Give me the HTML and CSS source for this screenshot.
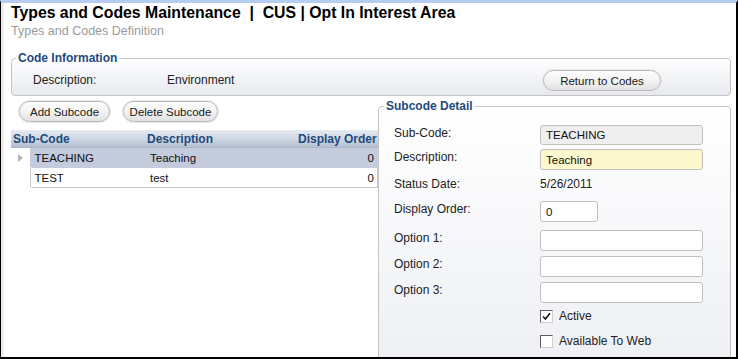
FILE: index.html
```html
<!DOCTYPE html>
<html lang="en">
<head>
    <meta charset="UTF-8">
    <title>Types and Codes Maintenance</title>
    <link rel="stylesheet" href="styles.css">
</head>
<body>
    <div class="frame">
        <div class="page">
            <div class="page-title">Types and Codes Maintenance &nbsp;|&nbsp; CUS | Opt In Interest Area</div>
            <div class="page-subtitle">Types and Codes Definition</div>

            <fieldset class="code-info">
                <legend>Code Information</legend>
                <div class="info-row">
                    <span class="info-label">Description:</span>
                    <span class="info-value">Environment</span>
                    <button class="pill-button return-button" type="button">Return to Codes</button>
                </div>
            </fieldset>

            <div class="main">
                <div class="left-panel">
                    <div class="toolbar">
                        <button class="pill-button add-button" type="button">Add Subcode</button>
                        <button class="pill-button delete-button" type="button">Delete Subcode</button>
                    </div>
                    <table class="grid">
                        <colgroup>
                            <col class="c-ind">
                            <col class="c-code">
                            <col class="c-desc">
                            <col class="c-order">
                        </colgroup>
                        <thead>
                            <tr>
                                <th colspan="2" class="col-code">Sub-Code</th>
                                <th class="col-desc">Description</th>
                                <th class="col-order">Display Order</th>
                            </tr>
                        </thead>
                        <tbody>
                            <tr class="selected">
                                <td class="indicator"><span class="arrow"></span></td>
                                <td>TEACHING</td>
                                <td>Teaching</td>
                                <td class="num">0</td>
                            </tr>
                            <tr>
                                <td class="indicator"></td>
                                <td>TEST</td>
                                <td>test</td>
                                <td class="num">0</td>
                            </tr>
                        </tbody>
                    </table>
                </div>

                <fieldset class="detail">
                    <legend>Subcode Detail</legend>
                    <div class="detail-grid">
                        <label for="sub-code">Sub-Code:</label>
                        <input type="text" id="sub-code" class="field readonly" value="TEACHING" readonly>

                        <label for="description">Description:</label>
                        <input type="text" id="description" class="field required" value="Teaching">

                        <span class="detail-label">Status Date:</span>
                        <span class="detail-value">5/26/2011</span>

                        <label for="display-order">Display Order:</label>
                        <input type="text" id="display-order" class="field short" value="0">

                        <label for="option1">Option 1:</label>
                        <input type="text" id="option1" class="field">

                        <label for="option2">Option 2:</label>
                        <input type="text" id="option2" class="field">

                        <label for="option3">Option 3:</label>
                        <input type="text" id="option3" class="field">

                        <span></span>
                        <div class="check-row"><span class="check-box"><svg width="9" height="9" viewBox="0 0 9 9"><path d="M1 4.5 L3.4 7 L8 1.2" fill="none" stroke="#111" stroke-width="1.6"/></svg></span>Active</div>

                        <span></span>
                        <div class="check-row"><span class="check-box"></span>Available To Web</div>
                    </div>
                </fieldset>
            </div>
        </div>
    </div>
</body>
</html>
```

FILE: styles.css
```css
body {
    margin: 0;
    font-family: "Liberation Sans", Arial, sans-serif;
    background-color: #ffffff;
}

.frame {
    width: 735px;
    height: 354px;
    border-left: 1px solid #000000;
    border-right: 2px solid #000000;
    border-bottom: 2px solid #000000;
    border-top: 3px solid #b4cdf0;
    overflow: hidden;
}

.page {
    height: 100%;
    border-left: 3px solid #ececec;
    padding: 0 4px 0 7px;
    box-sizing: border-box;
}

.page-title {
    font-size: 15.8px;
    font-weight: bold;
    color: #000000;
    line-height: 18px;
    padding-top: 1px;
}

.page-subtitle {
    font-size: 12.5px;
    color: #9a9a9a;
    line-height: 14px;
    margin-top: 2px;
}

fieldset {
    margin: 0;
    padding: 0;
    border: 1px solid #c4c4c4;
    border-radius: 4px;
    background: linear-gradient(#ffffff, #e6e9ef);
}

legend {
    font-size: 12px;
    font-weight: bold;
    color: #1e4b7d;
    padding: 0 2px;
    margin-left: 4px;
    line-height: 14px;
}

.code-info {
    margin-top: 13px;
    width: 720px;
    box-sizing: border-box;
}

.info-row {
    display: flex;
    align-items: center;
    height: 30px;
    padding-left: 21px;
}

.info-label {
    font-size: 12px;
    color: #222222;
    width: 134px;
}

.info-value {
    font-size: 12px;
    color: #222222;
}

.pill-button {
    font-family: "Liberation Sans", Arial, sans-serif;
    font-size: 11.5px;
    color: #1a1a1a;
    border: 1px solid #b8b8b8;
    border-radius: 11px;
    background: linear-gradient(#fdfdfd, #f3f3f3 50%, #e2e2e2);
    box-shadow: 0 0 0 1px #ebebeb;
    height: 21px;
    padding: 0;
}

.return-button {
    width: 118px;
    margin-left: auto;
    margin-right: 69px;
    margin-top: 1px;
}

.main {
    display: grid;
    grid-template-columns: 367px 353px;
}

.toolbar {
    display: flex;
    gap: 13px;
    padding: 5px 0 0 8px;
    height: 29px;
    box-sizing: border-box;
}

.add-button {
    width: 91px;
}

.delete-button {
    width: 95px;
}

.grid {
    border-collapse: collapse;
    table-layout: fixed;
    width: 367px;
    margin-top: 5px;
    font-size: 11.5px;
}

.c-ind {
    width: 19px;
}

.c-code {
    width: 116px;
}

.c-desc {
    width: 150px;
}

.grid th {
    height: 17px;
    padding: 0 2px;
    font-size: 12px;
    font-weight: bold;
    color: #1e4b7d;
    text-align: left;
    white-space: nowrap;
    background: linear-gradient(#e6ebf2, #c8d1de 65%, #b3bfd0);
    border-bottom: 1px solid #a9b6c8;
}

.grid th.col-desc {
    padding-left: 1px;
}

.grid th.col-order {
    text-align: right;
}

.grid td {
    height: 19px;
    padding: 0 4px;
    color: #111111;
    border-top: 1px solid #c8c8c8;
    border-bottom: 1px solid #c8c8c8;
    white-space: nowrap;
}

.grid td.indicator {
    padding: 0;
    text-align: center;
    border-top-color: #ffffff;
    border-bottom-color: #ffffff;
}

.grid td.num {
    text-align: right;
    padding-right: 3px;
    border-right: 1px solid #c8c8c8;
}

.grid td:nth-child(2) {
    border-left: 1px solid #c8c8c8;
}

.grid tr.selected td {
    background-color: #c3cbdc;
    border-color: #c3cbdc;
}

.grid tr.selected td.indicator {
    background-color: #ffffff;
    border-color: #ffffff;
}

.arrow {
    display: inline-block;
    width: 0;
    height: 0;
    margin-top: 3px;
    border-top: 4px solid transparent;
    border-bottom: 4px solid transparent;
    border-left: 5px solid #b4b4b4;
}

.detail {
    margin-top: 3px;
    height: 290px;
    background: linear-gradient(#ffffff, #eceef3);
}

.detail legend {
    margin-left: 5px;
}

.detail-grid {
    display: grid;
    grid-template-columns: 146px 163px;
    grid-template-rows: 24px 27px 25px 29px 26px 26px 27px 25px 14px;
    align-items: start;
    padding: 12px 0 0 15px;
    font-size: 12px;
    color: #222222;
}

.detail-grid label,
.detail-label,
.detail-value {
    line-height: 14px;
    margin-top: 1px;
}

.field {
    width: 163px;
    height: 21px;
    box-sizing: border-box;
    border: 1px solid #c0c0c0;
    border-radius: 3px;
    background-color: #ffffff;
    font-family: "Liberation Sans", Arial, sans-serif;
    font-size: 11.5px;
    color: #111111;
    padding: 0 5px;
}

.field.readonly {
    background-color: #efefef;
    height: 20px;
}

.field.required {
    background-color: #fdf8cd;
}

.field.short {
    width: 58px;
}

.check-row {
    display: flex;
    align-items: center;
    gap: 6px;
    line-height: 14px;
}

.check-box {
    width: 11px;
    height: 11px;
    border: 1px solid #5e5e5e;
    border-right-color: #d0d0d0;
    border-bottom-color: #d0d0d0;
    background-color: #ffffff;
    display: flex;
    align-items: center;
    justify-content: center;
}
```
